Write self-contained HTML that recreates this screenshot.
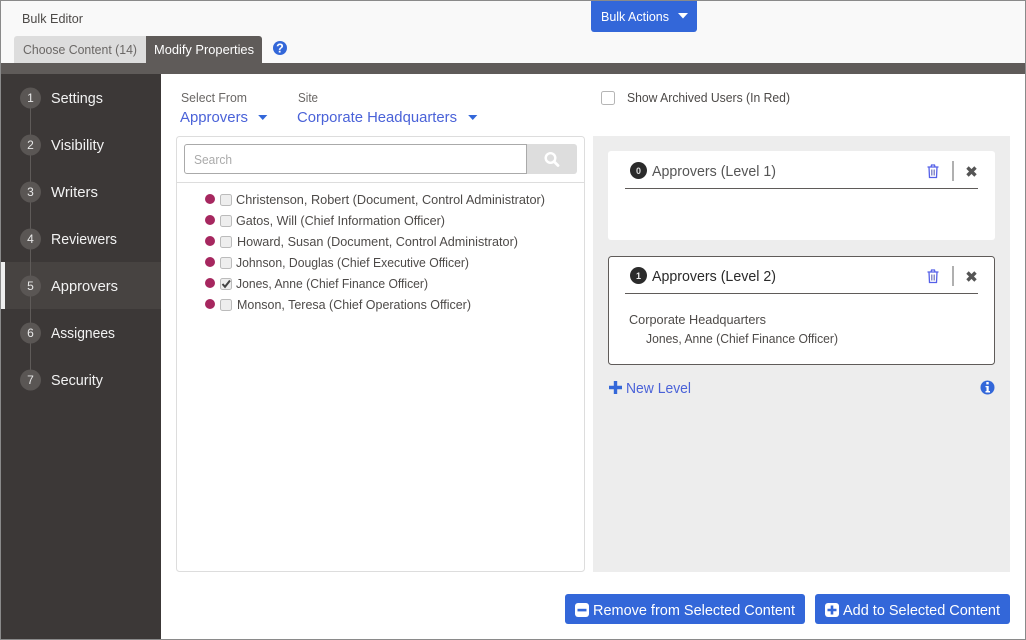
<!DOCTYPE html>
<html lang="en"><head><meta charset="utf-8"><title>Bulk Editor</title>
<style>
html,body{margin:0;padding:0;background:#fff;width:1026px;height:640px;overflow:hidden}
svg{display:block}
text{font-family:"Liberation Sans",sans-serif;font-size:13px;fill:#4d4a48}
.s{font-size:15px;fill:#f2f2f2}
.n{font-size:12px;fill:#e8e8e8;text-anchor:middle}
.l{font-size:15px;fill:#4a62d8}
.w{fill:#fff}
.b{font-size:15px;fill:#fff}
.t{font-size:15px}
</style></head><body>
<svg width="1026" height="640" viewBox="0 0 1026 640" xmlns="http://www.w3.org/2000/svg">
<defs><symbol id="caret" viewBox="0 0 10 6" overflow="visible"><path d="M0 0H10L5 5.500Z"/></symbol></defs>
<rect width="1026" height="640" fill="#fff"/>
<rect x="1" y="1" width="1024" height="62" fill="#f9f9f9"/>
<!-- tabs -->
<path d="M14 63V39a3 3 0 0 1 3-3H146V63Z" fill="#dddddd"/>
<path d="M146 36H259a3 3 0 0 1 3 3V63H146Z" fill="#5f5b59"/>
<rect x="1" y="63" width="1024" height="11" fill="#5f5b59"/>
<text x="22" y="23" textLength="61" lengthAdjust="spacingAndGlyphs">Bulk Editor</text>
<text x="23" y="54" textLength="114" lengthAdjust="spacingAndGlyphs" style="fill:#6a6765">Choose Content (14)</text>
<text x="154" y="54" textLength="100" lengthAdjust="spacingAndGlyphs" class="w">Modify Properties</text>
<circle cx="280" cy="48" r="7" fill="#3367d9"/>
<text x="280" y="52.500" text-anchor="middle" style="font-size:12.500px;font-weight:bold;fill:#fff">?</text>
<!-- bulk actions -->
<path d="M591 1H697V29a3 3 0 0 1-3 3H594a3 3 0 0 1-3-3Z" fill="#3367d9"/>
<text x="601" y="21" textLength="68" lengthAdjust="spacingAndGlyphs" class="w">Bulk Actions</text>
<use href="#caret" x="678" y="13" width="10" height="6" fill="#fff"/>
<!-- sidebar -->
<rect x="1" y="74" width="160" height="565" fill="#3c3837"/>
<rect x="1" y="262" width="160" height="47" fill="#474341"/>
<rect x="1" y="262" width="4" height="47" fill="#efefef"/>
<rect x="30" y="98" width="1" height="282" fill="#5f5b59"/>
<g fill="#5a5654">
<circle cx="30.500" cy="98" r="10.500"/><circle cx="30.500" cy="145" r="10.500"/><circle cx="30.500" cy="192" r="10.500"/><circle cx="30.500" cy="239" r="10.500"/><circle cx="30.500" cy="286" r="10.500"/><circle cx="30.500" cy="333" r="10.500"/><circle cx="30.500" cy="380" r="10.500"/>
</g>
<text class="n" x="30.500" y="102">1</text><text class="n" x="30.500" y="149">2</text><text class="n" x="30.500" y="196">3</text><text class="n" x="30.500" y="243">4</text><text class="n" x="30.500" y="290">5</text><text class="n" x="30.500" y="337">6</text><text class="n" x="30.500" y="384">7</text>
<text class="s" x="51" y="103" textLength="52" lengthAdjust="spacingAndGlyphs">Settings</text>
<text class="s" x="51" y="150" textLength="53" lengthAdjust="spacingAndGlyphs">Visibility</text>
<text class="s" x="51" y="197" textLength="47" lengthAdjust="spacingAndGlyphs">Writers</text>
<text class="s" x="51" y="244" textLength="66" lengthAdjust="spacingAndGlyphs">Reviewers</text>
<text class="s" x="51" y="291" textLength="67" lengthAdjust="spacingAndGlyphs">Approvers</text>
<text class="s" x="51" y="338" textLength="64" lengthAdjust="spacingAndGlyphs">Assignees</text>
<text class="s" x="51" y="385" textLength="52" lengthAdjust="spacingAndGlyphs">Security</text>
<!-- selectors -->
<text x="181" y="102" textLength="66" lengthAdjust="spacingAndGlyphs" style="fill:#6a6765">Select From</text>
<text x="298" y="102" textLength="20" lengthAdjust="spacingAndGlyphs" style="fill:#6a6765">Site</text>
<text class="l" x="180" y="122" textLength="68" lengthAdjust="spacingAndGlyphs">Approvers</text>
<use href="#caret" x="258" y="115" width="9.500" height="5.500" fill="#3367d9"/>
<text class="l" x="297" y="122" textLength="160" lengthAdjust="spacingAndGlyphs">Corporate Headquarters</text>
<use href="#caret" x="468" y="115" width="9.500" height="5.500" fill="#3367d9"/>
<!-- list panel -->
<rect x="176.500" y="136.500" width="408" height="435" rx="3" fill="#fff" stroke="#dddddd"/>
<path d="M177 182.500H584" stroke="#dddddd"/>
<path d="M527 144H574a3 3 0 0 1 3 3V171a3 3 0 0 1-3 3H527Z" fill="#dddddd"/>
<path d="M527 144.500H187a2.500 2.500 0 0 0-2.500 2.500V171a2.500 2.500 0 0 0 2.500 2.500H527" fill="#fff" stroke="#aaaaaa"/>
<rect x="526" y="144" width="1" height="30" fill="#aaaaaa"/>
<text x="194" y="164" textLength="38" lengthAdjust="spacingAndGlyphs" style="fill:#aaa">Search</text>
<circle cx="550.500" cy="158" r="4.800" fill="none" stroke="#fff" stroke-width="2.400"/>
<path d="M554 161.500L558 165.500" stroke="#fff" stroke-width="2.800" stroke-linecap="round"/>
<g fill="#a6275f">
<circle cx="210" cy="199" r="5"/><circle cx="210" cy="220" r="5"/><circle cx="210" cy="241" r="5"/><circle cx="210" cy="262" r="5"/><circle cx="210" cy="283" r="5"/><circle cx="210" cy="304" r="5"/>
</g>
<g fill="#eeeeee" stroke="#bbbbbb">
<rect x="220.500" y="194.500" width="11" height="11" rx="2"/><rect x="220.500" y="215.500" width="11" height="11" rx="2"/><rect x="220.500" y="236.500" width="11" height="11" rx="2"/><rect x="220.500" y="257.500" width="11" height="11" rx="2"/><rect x="220.500" y="278.500" width="11" height="11" rx="2"/><rect x="220.500" y="299.500" width="11" height="11" rx="2"/>
</g>
<path d="M222.500 284L225 286.800L230 280.500" fill="none" stroke="#444" stroke-width="2"/>
<text x="236" y="204" textLength="309" lengthAdjust="spacingAndGlyphs">Christenson, Robert (Document, Control Administrator)</text>
<text x="236" y="225" textLength="209" lengthAdjust="spacingAndGlyphs">Gatos, Will (Chief Information Officer)</text>
<text x="237" y="246" textLength="281" lengthAdjust="spacingAndGlyphs">Howard, Susan (Document, Control Administrator)</text>
<text x="236" y="267" textLength="233" lengthAdjust="spacingAndGlyphs">Johnson, Douglas (Chief Executive Officer)</text>
<text x="236" y="288" textLength="192" lengthAdjust="spacingAndGlyphs">Jones, Anne (Chief Finance Officer)</text>
<text x="237" y="309" textLength="234" lengthAdjust="spacingAndGlyphs">Monson, Teresa (Chief Operations Officer)</text>
<!-- archived -->
<rect x="601.500" y="91.500" width="13" height="13" rx="2" fill="#fff" stroke="#b5b5b5"/>
<text x="627" y="102" textLength="163" lengthAdjust="spacingAndGlyphs">Show Archived Users (In Red)</text>
<!-- right panel -->
<rect x="593" y="136" width="417" height="436" fill="#ededed"/>
<rect x="608" y="151" width="387" height="89" rx="3" fill="#fff"/>
<path d="M625 188.500H978" stroke="#5f5b59"/>
<circle cx="638.500" cy="170.500" r="8.500" fill="#2b2b2b"/>
<text x="638.500" y="173.800" text-anchor="middle" style="font-size:9px;font-weight:bold;fill:#ddd">0</text>
<text class="t" x="652" y="176" textLength="124" lengthAdjust="spacingAndGlyphs" style="fill:#555">Approvers (Level 1)</text>
<g fill="none" stroke="#5560e8" stroke-width="1.300">
<path d="M927.500 167H938.500M929 167L929.500 177.500H936.500L937 167M931 167L931.500 165H934.500L935 167"/>
<path d="M931.500 169.500V175.500M933 169.500V175.500M934.500 169.500V175.500" stroke="#8a8ec8" stroke-width="1"/>
</g>
<rect x="952" y="161" width="2" height="20" fill="#b0b0b0"/>
<path d="M967.500 167.500L975.500 175.500M975.500 167.500L967.500 175.500" stroke="#555" stroke-width="3.400"/>
<rect x="608.500" y="256.500" width="386" height="108" rx="3" fill="#fff" stroke="#5f5b59"/>
<path d="M625 293.500H978" stroke="#5f5b59"/>
<circle cx="638.500" cy="275.500" r="8.500" fill="#2b2b2b"/>
<text x="638.500" y="278.800" text-anchor="middle" style="font-size:9px;font-weight:bold;fill:#eee">1</text>
<text class="t" x="652" y="281" textLength="124" lengthAdjust="spacingAndGlyphs" style="fill:#2a2a2a">Approvers (Level 2)</text>
<g fill="none" stroke="#5560e8" stroke-width="1.300">
<path d="M927.500 272H938.500M929 272L929.500 282.500H936.500L937 272M931 272L931.500 270H934.500L935 272"/>
<path d="M931.500 274.500V280.500M933 274.500V280.500M934.500 274.500V280.500" stroke="#8a8ec8" stroke-width="1"/>
</g>
<rect x="952" y="266" width="2" height="20" fill="#b0b0b0"/>
<path d="M967.500 272.500L975.500 280.500M975.500 272.500L967.500 280.500" stroke="#555" stroke-width="3.400"/>
<text x="629" y="324" textLength="137" lengthAdjust="spacingAndGlyphs">Corporate Headquarters</text>
<text x="646" y="343" textLength="192" lengthAdjust="spacingAndGlyphs">Jones, Anne (Chief Finance Officer)</text>
<path d="M609 387.500H622M615.500 381V394" stroke="#3367d9" stroke-width="3.400"/>
<text class="l" x="626" y="393" textLength="65" lengthAdjust="spacingAndGlyphs">New Level</text>
<circle cx="987.500" cy="387.500" r="7" fill="#3367d9"/>
<rect x="986.300" y="382" width="2.400" height="2.400" fill="#fff"/>
<path d="M985.500 386H988.700V391H990V392.500H985.500V391H986.500V387.300H985.500Z" fill="#fff"/>
<!-- buttons -->
<rect x="565" y="594" width="240" height="30" rx="3" fill="#3367d9"/>
<rect x="815" y="594" width="195" height="30" rx="3" fill="#3367d9"/>
<rect x="575" y="603" width="14" height="14" rx="3" fill="#fff"/>
<rect x="577.500" y="608.800" width="9" height="2.600" fill="#3367d9"/>
<rect x="825" y="603" width="14" height="14" rx="3" fill="#fff"/>
<path d="M827.500 610H836.500M832 605.500V614.500" stroke="#3367d9" stroke-width="2.600"/>
<text class="b" x="593" y="615" textLength="202" lengthAdjust="spacingAndGlyphs">Remove from Selected Content</text>
<text class="b" x="843" y="615" textLength="157" lengthAdjust="spacingAndGlyphs">Add to Selected Content</text>
<!-- frame -->
<rect x="0.500" y="0.500" width="1025" height="639" fill="none" stroke="#8a8a8a"/>
</svg>
</body></html>
